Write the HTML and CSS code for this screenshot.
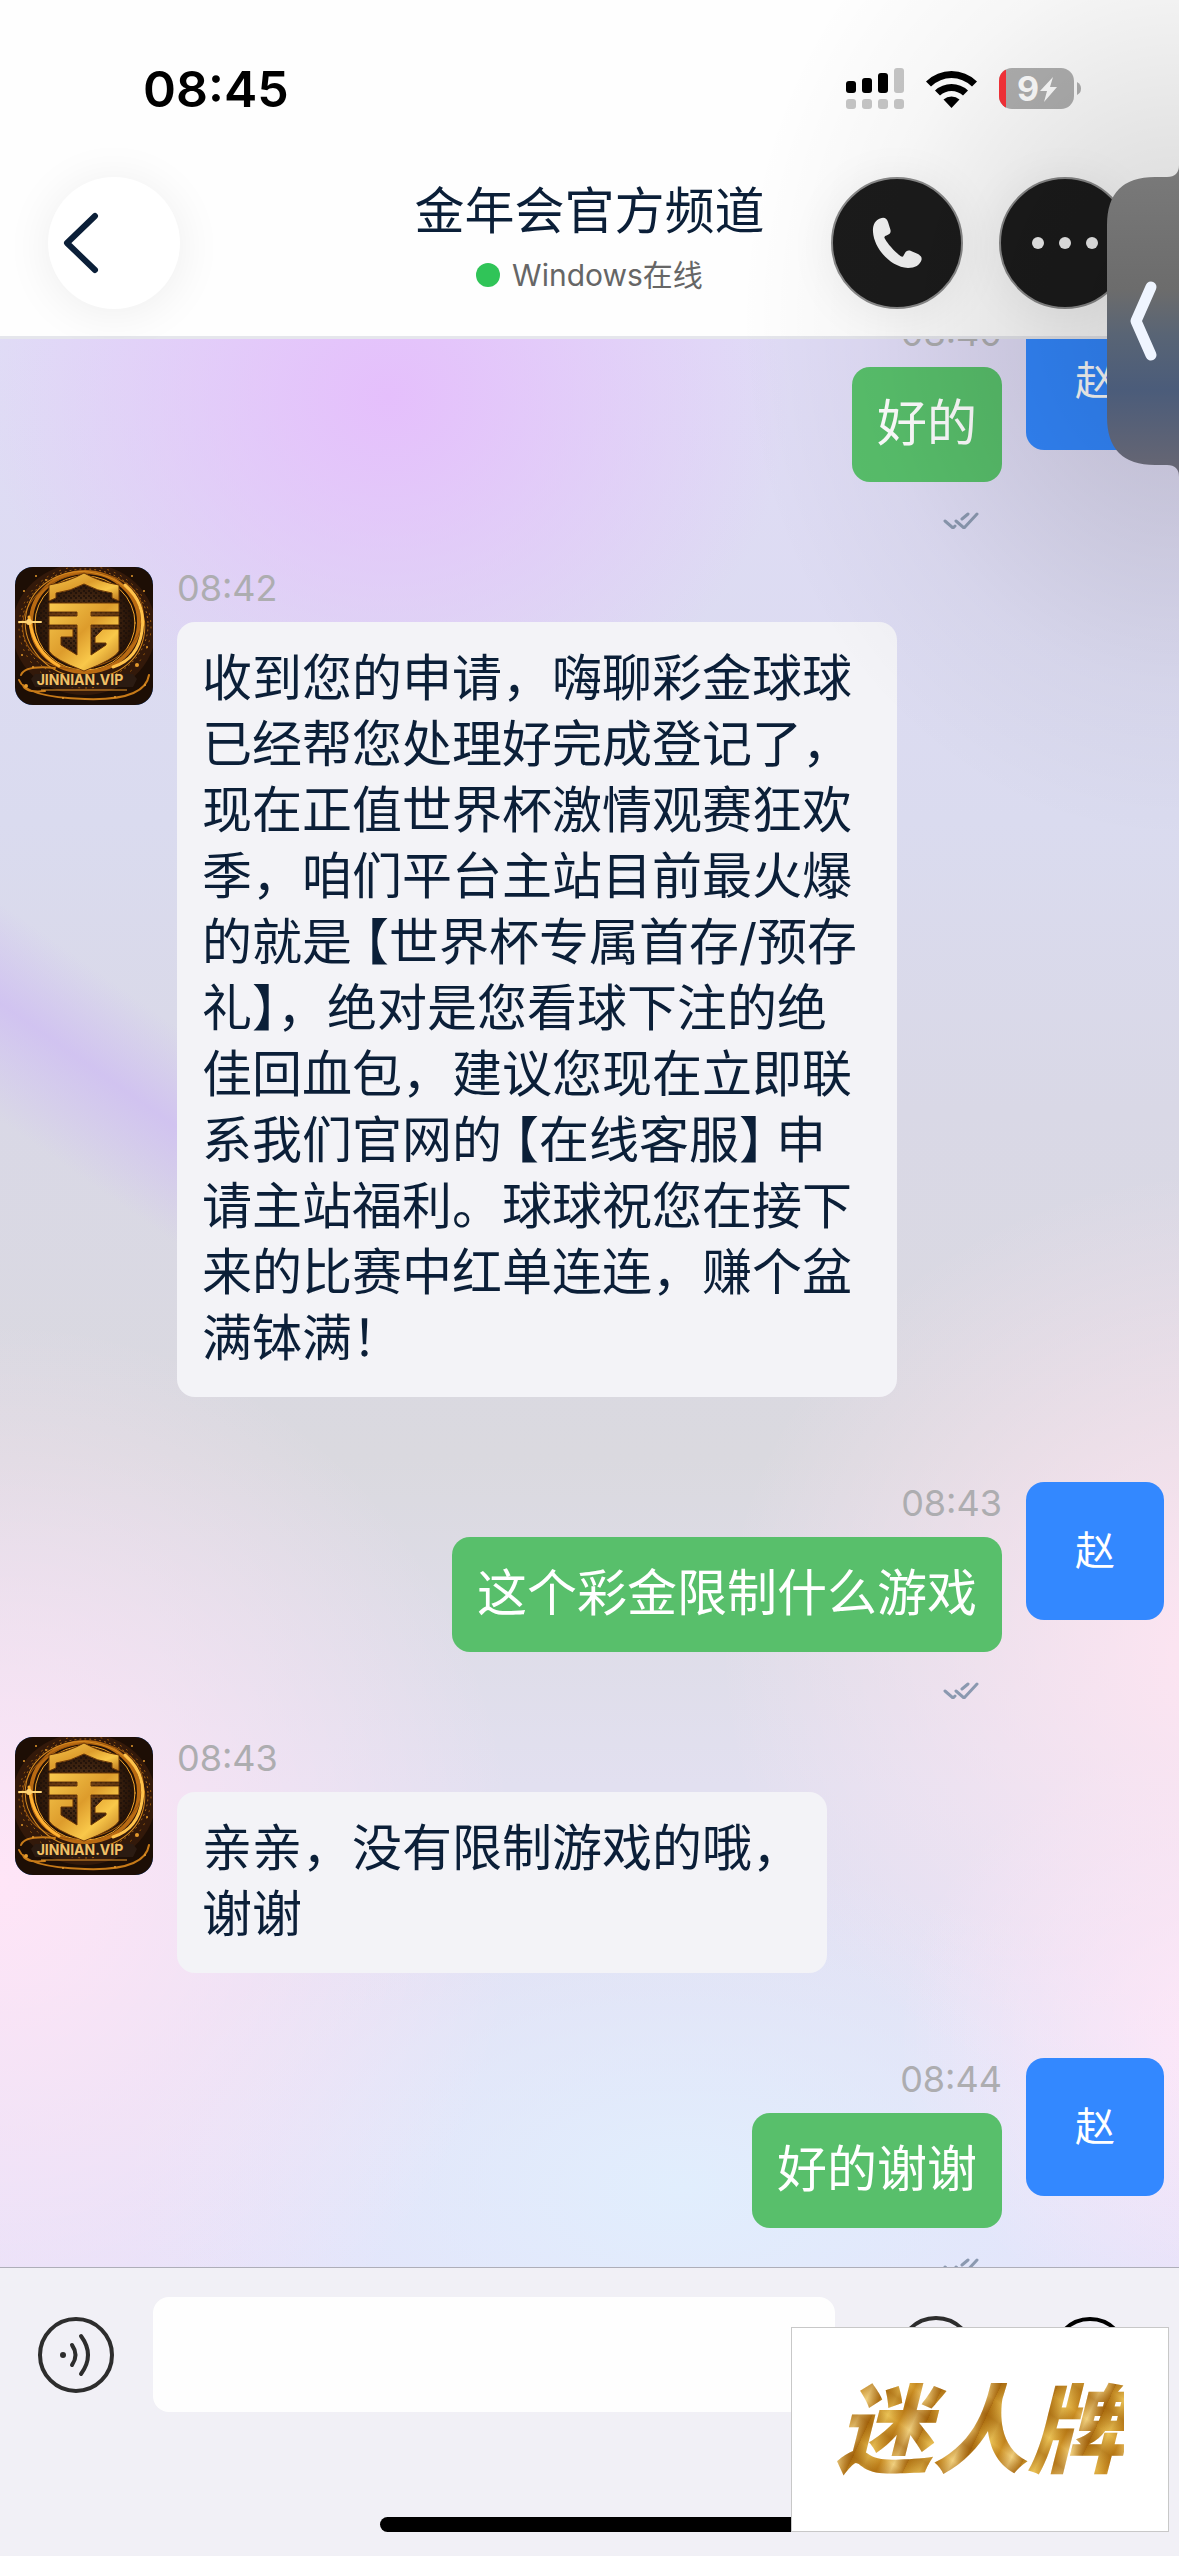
FILE: index.html
```html
<!DOCTYPE html>
<html lang="zh-CN">
<head>
<meta charset="utf-8">
<meta name="viewport" content="width=device-width, initial-scale=1">
<title>金年会官方频道</title>
<link rel="stylesheet" href="styles.css">
</head>
<body>
<svg class="defs" aria-hidden="true">
  <defs>
    <radialGradient id="glow"><stop offset="0" stop-color="#5c3c20"/><stop offset=".6" stop-color="#3a200e"/><stop offset="1" stop-color="#1e0e05"/></radialGradient>
    <linearGradient id="gold" x1="0" y1="0" x2="1" y2="1"><stop offset="0" stop-color="#f7c94e"/><stop offset=".45" stop-color="#dd9c2c"/><stop offset=".7" stop-color="#f9c84a"/><stop offset="1" stop-color="#b8721a"/></linearGradient>
    <pattern id="mesh" width="5" height="5" patternUnits="userSpaceOnUse"><circle cx="1" cy="1" r="1" fill="#1c1009"/><circle cx="4" cy="4" r="1" fill="#1c1009"/></pattern>
    <symbol id="crest" viewBox="0 0 138 138">
      <rect width="138" height="138" fill="#1d0e05"/>
      <ellipse cx="69" cy="62" rx="72" ry="66" fill="#33190a"/>
      <ellipse cx="69" cy="55" rx="56" ry="50" fill="url(#glow)"/>
      <ellipse cx="69" cy="55" rx="48" ry="45" fill="url(#mesh)"/>
      <g fill="none" stroke-linecap="round">
        <ellipse cx="70" cy="55" rx="54" ry="50" stroke="#b96a12" stroke-width="4"/>
        <ellipse cx="70" cy="56" rx="50" ry="47" stroke="#f3a52c" stroke-width="1"/>
        <ellipse cx="68" cy="54" rx="61" ry="47" stroke="#9a560e" stroke-width="1" transform="rotate(-14 68 54)"/>
        <ellipse cx="70" cy="58" rx="60" ry="53" stroke="#d58a20" stroke-width="1" transform="rotate(12 70 58)"/>
        <ellipse cx="70" cy="58" rx="63" ry="56" stroke="#b9701a" stroke-width="1" stroke-dasharray="1 4"/>
        <ellipse cx="70" cy="60" rx="66" ry="61" stroke="#a8620f" stroke-width="1" stroke-dasharray="1 6"/>
        <path d="M110 18Q131 36 127 64T98 100" stroke="#ffc24a" stroke-width="3"/>
        <path d="M14 50Q18 84 44 99" stroke="#ffb233" stroke-width="3"/>
        <path d="M6 108Q10 98 40 101M8 118Q10 126 30 124M4 113Q10 130 70 132T134 108" stroke="#c77a18" stroke-width="2"/>
        <path d="M4 55H26" stroke="#ffd678" stroke-width="2"/>
      </g>
      <g fill="#e59a2c"><circle cx="21" cy="9" r="1"/><circle cx="9" cy="24" r="1"/><circle cx="31" cy="13" r="1"/><circle cx="117" cy="9" r="1"/><circle cx="129" cy="24" r="1"/><circle cx="132" cy="80" r="1"/><circle cx="122" cy="98" r="2"/><circle cx="7" cy="88" r="1"/><circle cx="18" cy="100" r="1"/><circle cx="11" cy="119" r="2"/><circle cx="130" cy="118" r="1"/><circle cx="100" cy="130" r="1"/><circle cx="48" cy="131" r="1"/><circle cx="14" cy="55" r="3" fill="#ffd070"/></g>
      <g stroke="#6b3708" stroke-width="1" fill="url(#gold)">
        <path d="M34 18Q53 15 69 6Q85 15 104 18V34L97 31V26Q82 24 69 17Q56 24 41 26V31L34 34Z"/>
        <path d="M34 36H104V45H76V49H104V58H76V88L91 78V76H80V70L88 62H104V84Q100 92 69 104Q38 92 34 84V62H58V70H46V78L62 88V58H34V49H62V45H34Z"/>
      </g>
      <path d="M34 47H62M76 47H104M34 60H62M76 60H104" stroke="#8a4b10" stroke-width="1"/>
      <path d="M20 107H118L122 112L118 120H20L16 112Z" fill="#2b1b12"/>
      <path d="M26 123H112" stroke="#e8962a"/>
      <text x="65" y="118" text-anchor="middle" font-family="Inter, sans-serif" font-size="14" font-weight="700" fill="#f1c065">JINNIAN.VIP</text>
    </symbol>
    <symbol id="ticks" viewBox="0 0 36 18">
      <path d="M2 10L10 17L12 15M13 10L21 17L34 3M19 8L25 3" fill="none" stroke="#8b99b0" stroke-width="3" stroke-linecap="round" stroke-linejoin="round"/>
    </symbol>
  </defs>
</svg>

<div class="app">
  <header class="header">
    <div class="status">
      <span class="clock">08:45</span>
      <span class="status-icons">
        <svg width="58" height="41" viewBox="0 0 58 41" role="img" aria-label="信号">
          <rect x="0" y="13" width="10" height="12" rx="3"/><rect x="16" y="10" width="10" height="15" rx="3"/><rect x="32" y="5" width="10" height="20" rx="3"/>
          <g fill="#c6c6c6"><rect x="48" y="0" width="10" height="25" rx="3"/><rect x="0" y="31" width="10" height="10" rx="3"/><rect x="16" y="31" width="10" height="10" rx="3"/><rect x="32" y="31" width="10" height="10" rx="3"/><rect x="48" y="31" width="10" height="10" rx="3"/></g>
        </svg>
        <svg width="51" height="38" viewBox="0 0 51 38" role="img" aria-label="无线网络">
          <path d="M0 11.500Q11 1 25.500 1T51 11.500L46 16.500Q37 8 25.500 8T5 16.500Z"/>
          <path d="M9 20.500Q16 14 25.500 14T42 20.500L37 25.500Q32 21 25.500 21T14 25.500Z"/>
          <path d="M17.500 29.500Q21 26.500 25.500 26.500T33.500 29.500L25.500 38Z"/>
        </svg>
        <svg width="82" height="41" viewBox="0 0 82 41" role="img" aria-label="电量 9%">
          <clipPath id="cell"><rect width="75" height="41" rx="13"/></clipPath>
          <g clip-path="url(#cell)"><rect width="75" height="41" fill="#b0b0b0"/><rect width="7" height="41" fill="#fa3239"/></g>
          <path d="M78 14Q82 16 82 20.500T78 27Z" fill="#b0b0b0"/>
          <text x="18" y="33" font-family="Inter, sans-serif" font-size="34" font-weight="700" fill="#fff">9</text>
          <path d="M54 9L41 23H48L45 34L58 19H51Z" fill="#fff"/>
        </svg>
      </span>
    </div>
    <nav class="nav">
      <div class="side">
        <button class="round back" aria-label="返回"><svg width="40" height="66" viewBox="0 0 40 66"><path d="M34 6L6 33L34 60" fill="none" stroke="#0b1f38" stroke-width="6" stroke-linecap="round" stroke-linejoin="round"/></svg></button>
      </div>
      <div class="heading">
        <h1>金年会官方频道</h1>
        <p><i class="dot"></i>Windows在线</p>
      </div>
      <div class="side end">
        <button class="round dark" aria-label="通话"><svg width="50" height="52" viewBox="0 0 50 52"><path d="M8 1.500C3 3.500 .5 8 1 15C2 31 18 50 36 51C43 51 48 48 49.500 43C50 40 49 39 46 37L39 34C36 33 34 34 33 36L31 39.500C30 40 28 39 26 37C19 31 14 24 12.500 21C12 20 13 19 14.500 18.500C18 17 19 16 18.500 13L16 5C14.500 1 12 0 8 1.500Z" fill="#f2f2f2"/></svg></button>
        <button class="round dark" aria-label="更多"><svg width="66" height="12" viewBox="0 0 66 12" fill="#f2f2f2"><circle cx="6" cy="6" r="6"/><circle cx="33" cy="6" r="6"/><circle cx="60" cy="6" r="6"/></svg></button>
      </div>
    </nav>
  </header>

  <main class="chat">
    <ol class="messages">
      <li class="msg out">
        <span class="avatar">赵</span>
        <div class="body"><time>08:40</time><p class="bubble">好的</p><svg class="ticks" role="img" aria-label="已读"><use href="#ticks"/></svg></div>
      </li>
      <li class="msg in">
        <svg class="avatar" role="img" aria-label="金年会"><use href="#crest"/></svg>
        <div class="body"><time>08:42</time><p class="bubble">收到您的申请，嗨聊彩金球球已经帮您处理好完成登记了，现在正值世界杯激情观赛狂欢季，咱们平台主站目前最火爆的就是<span class="open">【</span>世界杯专属首存/预存礼】，绝对是您看球下注的绝佳回血包，建议您现在立即联系我们官网的<span class="open">【</span>在线客服<span class="close">】</span>申请主站福利。球球祝您在接下来的比赛中红单连连，赚个盆满钵满！</p></div>
      </li>
      <li class="msg out">
        <span class="avatar">赵</span>
        <div class="body"><time>08:43</time><p class="bubble">这个彩金限制什么游戏</p><svg class="ticks" role="img" aria-label="已读"><use href="#ticks"/></svg></div>
      </li>
      <li class="msg in">
        <svg class="avatar" role="img" aria-label="金年会"><use href="#crest"/></svg>
        <div class="body"><time>08:43</time><p class="bubble">亲亲，没有限制游戏的哦，<br>谢谢</p></div>
      </li>
      <li class="msg out">
        <span class="avatar">赵</span>
        <div class="body"><time>08:44</time><p class="bubble">好的谢谢</p><svg class="ticks" role="img" aria-label="已读"><use href="#ticks"/></svg></div>
      </li>
    </ol>
  </main>

  <footer class="composer">
    <div class="bar">
      <button class="icon" aria-label="语音"><svg width="78" height="78" viewBox="0 0 78 78" fill="none" stroke="#2d2d2d" stroke-width="4" stroke-linecap="round"><circle cx="39" cy="39" r="36"/><path d="M35 29Q42 39 35 49M44 20Q58 39 44 58"/><circle cx="26" cy="39" r="3" fill="#2d2d2d" stroke="none"/></svg></button>
      <input type="text" class="field" aria-label="消息">
      <button class="icon" aria-label="表情"><svg width="78" height="78" viewBox="0 0 78 78" fill="none" stroke="#2d2d2d" stroke-width="4" stroke-linecap="round"><circle cx="39" cy="39" r="37"/><path d="M26 46Q39 62 52 46"/><circle cx="27" cy="30" r="2"/><circle cx="51" cy="30" r="2"/></svg></button>
      <button class="icon" aria-label="添加"><svg width="78" height="78" viewBox="0 0 78 78" fill="none" stroke="#000" stroke-width="4" stroke-linecap="round"><circle cx="39" cy="39" r="36"/><path d="M39 23V55M23 39H55"/></svg></button>
    </div>
    <div class="home"></div>
  </footer>

  <div class="shade"></div>
  <button class="handle" aria-label="展开侧栏"><svg width="72" height="312" viewBox="0 0 72 312">
    <defs><linearGradient id="glass" x1="0" y1="0" x2="0" y2="1"><stop offset="0" stop-color="#7a7a7a"/><stop offset=".4" stop-color="#6c6c6c"/><stop offset=".55" stop-color="#586475"/><stop offset=".72" stop-color="#4b5c7a"/><stop offset="1" stop-color="#696772"/></linearGradient></defs>
    <path d="M72 0Q72 12 60 12H48Q0 12 0 60V252Q0 300 48 300H60Q72 300 72 312Z" fill="url(#glass)"/>
    <path d="M44 122L29 156L44 190" fill="none" stroke="#eff5ff" stroke-width="11" stroke-linecap="round" stroke-linejoin="round"/>
  </svg></button>
  <aside class="mark"><span>迷人牌</span></aside>
</div>
</body>
</html>
```
FILE: styles.css
```css
* { box-sizing: border-box; }
body {
  margin: 0;
  font-family: Inter, "Noto Sans CJK SC", sans-serif;
  color: #0b1f38;
}
h1, p, ol { margin: 0; padding: 0; font-weight: 400; }
button { border: 0; padding: 0; background: none; color: inherit; font: inherit; }
svg { display: block; flex: none; }
.defs { position: absolute; width: 0; height: 0; }

.app {
  position: relative;
  display: flex;
  flex-direction: column;
  height: 100vh;
  overflow: hidden;
}

/* Header */
.header {
  flex: none;
  background: #fefefe;
  border-bottom: 3px solid #e5e6ec;
  padding: 0 48px 27px;
}
.status {
  display: flex;
  justify-content: space-between;
  align-items: center;
  height: 177px;
  padding: 0 50px 0 95px;
}
.clock { font-size: 50px; font-weight: 600; color: #000; }
.status-icons { display: flex; align-items: center; gap: 22px; }
.nav { display: flex; align-items: center; }
.side { flex: 1; display: flex; gap: 36px; }
.end { justify-content: flex-end; }
.round {
  flex: none;
  display: flex;
  align-items: center;
  justify-content: center;
  width: 132px;
  height: 132px;
  border-radius: 50%;
}
.back {
  justify-content: flex-start;
  padding-left: 13px;
  background: #fff;
  box-shadow: 0 4px 48px rgba(0, 0, 0, .07);
}
.dark {
  background: #1b1b1b;
  border: 2px solid #8a8a8a;
  box-shadow: 0 4px 48px rgba(0, 0, 0, .07);
}
.heading { text-align: center; }
.heading h1 { font-size: 50px; line-height: 64px; }
.heading p {
  display: flex;
  align-items: center;
  justify-content: center;
  gap: 12px;
  font-size: 30px;
  line-height: 64px;
  color: #666;
}
.dot { width: 24px; height: 24px; border-radius: 50%; background: #30c458; }

/* Conversation */
.chat {
  flex: 1;
  min-height: 0;
  overflow: hidden;
  background:
    radial-gradient(400px 360px at 33% 3%, #e5bffc, rgba(229, 191, 252, 0)),
    linear-gradient(35deg, rgba(206, 188, 243, 0) 38%, rgba(206, 188, 243, .75) 52%, rgba(206, 188, 243, 0) 64%) 0 500px / 340px 600px no-repeat,
    radial-gradient(520px 560px at 0% 80%, #ffe5f7, rgba(255, 229, 247, 0)),
    radial-gradient(520px 480px at 105% 68%, #ffe5f2, rgba(255, 229, 242, 0)),
    radial-gradient(340px 300px at 105% 88%, #ffe8fa, rgba(255, 232, 250, 0)),
    radial-gradient(560px 330px at 58% 96%, #e1eefd, rgba(225, 238, 253, 0)),
    linear-gradient(#e0dcf6, #dadbef 25%, #d9d8e6 40%, #dad9df 58%, #e2e0f0 75%, #e4e1f9);
}
.messages {
  display: flex;
  flex-direction: column;
  gap: 85px;
  margin-top: -27px;
  padding: 0 15px;
  list-style: none;
}
.msg { display: flex; align-items: flex-start; gap: 24px; }
.out { flex-direction: row-reverse; }
.avatar {
  flex: none;
  display: flex;
  align-items: center;
  justify-content: center;
  width: 138px;
  height: 138px;
  border-radius: 18px;
  background: #3388ff;
  color: #fff;
  font-size: 40px;
  line-height: 60px;
}
.body { position: relative; display: flex; flex-direction: column; align-items: flex-start; }
.out .body { align-items: flex-end; }
time { height: 55px; font-size: 36px; line-height: 43px; color: #adadb0; }
.bubble {
  max-width: 720px;
  padding: 23px 25px 26px;
  border-radius: 18px;
  background: #f3f3f7;
  font-size: 50px;
  line-height: 66px;
}
.out .bubble { background: #58bf6b; color: #fff; }
.open, .close { font-feature-settings: "halt"; }
.open { padding-left: 12px; }
.close { padding-right: 12px; }
.ticks { position: absolute; top: 100%; right: 23px; width: 36px; height: 18px; margin-top: 29px; }

/* Composer */
.composer {
  flex: none;
  background: #f1f0f6;
  border-top: 1px solid #aeaeb8;
  padding: 29px 0 24px;
}
.bar { display: flex; align-items: center; gap: 38px; padding: 0 50px 0 37px; }
.icon { flex: none; }
.field {
  flex: 1;
  min-width: 0;
  height: 115px;
  margin-right: 24px;
  padding: 0 24px;
  border: 0;
  border-radius: 16px;
  background: #fefefe;
  font: inherit;
  font-size: 50px;
}
.icon + .icon { margin-left: 38px; }
.home { width: 420px; height: 15px; margin: 105px auto 0; border-radius: 8px; background: #000; }

/* Overlays */
.shade {
  position: absolute;
  inset: 0;
  pointer-events: none;
  background: radial-gradient(440px 520px at 100% 321px, rgba(0, 0, 0, .17), rgba(0, 0, 0, .1) 35%, rgba(0, 0, 0, .03) 70%, rgba(0, 0, 0, 0));
}
.handle { position: absolute; top: 165px; right: 0; }
.mark {
  position: absolute;
  right: 10px;
  bottom: 24px;
  display: flex;
  align-items: center;
  justify-content: center;
  width: 378px;
  height: 205px;
  border: 1px solid #c8c8c8;
  background: #fff;
}
.mark span {
  font-size: 96px;
  font-weight: 900;
  font-style: italic;
  line-height: 120px;
  color: transparent;
  background:
    repeating-linear-gradient(35deg, rgba(150, 85, 5, .5), rgba(255, 225, 140, .1) 17px, rgba(150, 85, 5, .5) 37px),
    repeating-linear-gradient(115deg, #b87b14, #e9c052 14px, #c98a1c 27px, #f0d080 40px, #a8680c 52px);
  background-clip: text;
  -webkit-background-clip: text;
}
```
